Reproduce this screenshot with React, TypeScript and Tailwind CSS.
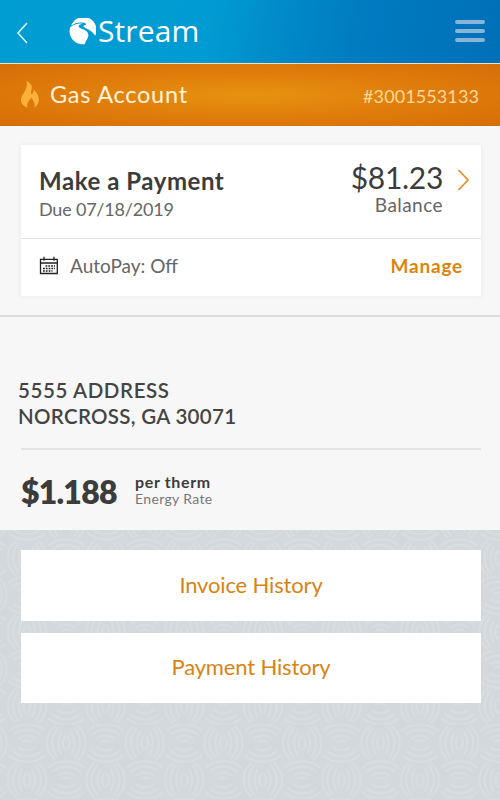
import React from 'react';

const StreamMark: React.FC = () => (
  <svg width="27" height="27" viewBox="0 0 27 27" fill="white">
    <path d="M2.600 6.200A13 13 0 0 1 26.200 17.800C24.600 14.200 20.600 11.600 16.300 9.900 13.200 8.700 14 7.700 16.300 7 18.300 6.200 16.500 5 13.500 4.600 9.500 4.100 5.600 5 2.600 7.500Z" />
    <path d="M1.200 9.300C5 6.300 9.500 5.100 13.500 5.700 9.500 6.700 8.200 8.500 11.600 10.300 16.500 12.200 20.200 14.200 19.200 18.400 18.500 21 16.500 23.500 15.600 26.200A13 13 0 0 1 1.200 9.300Z" />
  </svg>
);

const FlameIcon: React.FC = () => (
  <svg width="20" height="28" viewBox="0 0 20 28" fill="#fdb03c">
    <path d="M6.500 0c5 2.300 6.200 6 4.900 9.300-.5 1.400-.8 2.900.1 3.700 1.700-.6 2.500-2.600 2.200-4.600 3.300 3 5.600 7 5.100 11.300-.4 3.300-2.300 5.700-4.600 6.800 1.300-3.600-.2-6-3-9.800-2.100 3-5.200 5.500-3.700 9.900C3.500 25.300.800 22.500.9 18.800 1 13.300 8.800 8.800 6.500 0Z" />
  </svg>
);

const CalendarIcon: React.FC = () => (
  <svg width="20" height="20" viewBox="0 0 20 20" fill="none" stroke="#222" strokeWidth="1.300">
    <path d="M1.500 3.300h16.800v14.200H1.500zM1.500 7h16.800M5 .8v4M15 .8v4" />
    <path d="M6.500 10h9.500M4 12.500h12M4 15h9.500" strokeWidth="1.300" strokeDasharray="1.800 1" />
  </svg>
);

// Interlocking ripples, two cells wide and two cells high
const RipplePattern: React.FC = () => (
  <svg className="absolute inset-0" width="500" height="270">
    <defs>
      <g id="upright">
        <path d="M-11-17C-22-8-22 8-11 17M11-17C22-8 22 8 11 17" />
        <path d="M-8-15C-16-6-16 6-8 15M8-15C16-6 16 6 8 15" />
        <path d="M-5-11Q-11 0-5 11M5-11Q11 0 5 11M-1-7Q-6 0-1 7M1-7Q6 0 1 7" />
      </g>
      <g id="flat">
        <path d="M-18-12C-9-21 9-21 18-12M-18 12C-9 21 9 21 18 12" />
        <path d="M-14-8C-7-15 7-15 14-8M-14 8C-7 15 7 15 14 8" />
        <path d="M-9-4Q0-11 9-4M-9 4Q0 11 9 4M-5-1Q0-4 5-1" />
      </g>
      <pattern id="ripples" width="78.600" height="74" patternUnits="userSpaceOnUse" x="7.300" y="194.500">
        <g fill="none" stroke="#d9dee1" strokeWidth="1.800">
          <use href="#upright" x="19.650" y="55.500" />
          <use href="#flat" x="19.650" y="18.500" />
          <use href="#upright" x="58.950" y="18.500" />
          <use href="#flat" x="58.950" y="55.500" />
        </g>
      </pattern>
    </defs>
    <rect width="500" height="270" fill="url(#ripples)" />
  </svg>
);

const Header: React.FC = () => (
  <header className="flex h-16 items-center justify-between border-b border-[#eee0c4] bg-[linear-gradient(100deg,#009dd3_0%,#009bd2_42%,#0088c8_58%,#007ac0_74%,#0070b8_100%)] pr-[15px] pl-4">
    <div className="flex items-center">
      <svg width="12" height="22" viewBox="0 0 12 22" fill="none" stroke="#e5f5fb" strokeWidth="1.500" className="mt-0.5">
        <path d="M11 1 2 11l9 10" />
      </svg>
      <div className="ml-[41px] flex items-center">
        <StreamMark />
        <span className="-mt-0.5 ml-[2px] font-['Open_Sans',sans-serif] text-[30px] leading-[40px] tracking-[0.100px] text-white">Stream</span>
      </div>
    </div>
    <div className="-mt-px flex flex-col gap-[5px]">
      <span className="h-[4px] w-[30px] rounded-sm bg-[#86b5d8]" />
      <span className="h-[4px] w-[30px] rounded-sm bg-[#86b5d8]" />
      <span className="h-[4px] w-[30px] rounded-sm bg-[#86b5d8]" />
    </div>
  </header>
);

const AccountBar: React.FC = () => (
  <div className="flex h-[62px] items-center bg-[radial-gradient(ellipse_at_center,#e7920f_0%,#df7d0b_50%,#d66d08_100%)] pr-[21px] pl-[20px]">
    <FlameIcon />
    <span className="-mt-px ml-[10px] text-[23.500px] tracking-[0.750px] text-[#fff3dc]">Gas Account</span>
    <span className="ml-auto pt-0.5 text-[18px] tracking-[0.100px] text-[#ffd99f]">#3001553133</span>
  </div>
);

const PaymentCard: React.FC = () => (
  <div className="bg-white shadow-[0_0_5px_rgba(0,0,0,0.070)]">
    <div className="flex h-[94px] border-b border-[#e4e4e4] pr-[11px] pl-[18px]">
      <div className="pt-[21px]">
        <div className="text-[24px] leading-[30px] font-bold tracking-[0.550px] text-[#3c3c3c]">Make a Payment</div>
        <div className="text-[18px] leading-[27px] tracking-[-0.200px] text-[#666]">Due 07/18/2019</div>
      </div>
      <div className="ml-auto pt-[14px] text-right">
        <div className="text-[30px] leading-[36px] tracking-[-0.300px] text-[#3c3c3c]">$81.23</div>
        <div className="text-[19px] leading-[19px] tracking-[0.450px] text-[#666]">Balance</div>
      </div>
      <svg width="13" height="24" viewBox="0 0 13 24" fill="none" stroke="#e59328" strokeWidth="1.800" className="mt-[23px] ml-[14px]">
        <path d="M1.500 2 11 12 1.500 22" />
      </svg>
    </div>
    <div className="flex h-[57px] items-center pr-[18px] pb-[3px] pl-[18px]">
      <CalendarIcon />
      <span className="mt-px ml-[11px] text-[19px] text-[#666]">AutoPay: Off</span>
      <span className="mt-px ml-auto text-[19px] font-bold tracking-[0.800px] text-[#db850c]">Manage</span>
    </div>
  </div>
);

const EnergyRate: React.FC = () => (
  <section className="h-[213px] px-[19px] pt-[60px]">
    <div className="text-[20.500px] leading-[26px] font-semibold text-[#444]">
      <div className="-ml-px tracking-[0.600px]">5555 ADDRESS</div>
      <div className="-ml-px tracking-[0.300px]">NORCROSS, GA 30071</div>
    </div>
    <div className="mt-[19px] ml-[2px] border-t-2 border-[#e3e3e3]" />
    <div className="flex pt-[22px] pl-[2px]">
      <span className="w-[114px] text-[32px] leading-[40px] font-extrabold tracking-[-0.800px] text-[#3c3c3c]">$1.188</span>
      <div>
        <div className="text-[16px] leading-[20px] font-bold tracking-[0.650px] text-[#3c3c3c]">per therm</div>
        <div className="text-[14px] leading-[14px] tracking-[0.350px] text-[#777]">Energy Rate</div>
      </div>
    </div>
  </section>
);

const historyLinks = ['Invoice History', 'Payment History'];

export default function App() {
  return (
    <div className="h-[800px] w-[500px] overflow-hidden bg-[#f7f7f7] font-['Lato',sans-serif]">
      <Header />
      <AccountBar />
      <section className="h-[191px] border-b-2 border-[#dcdcdc] px-[19px] pt-[19px]">
        <div className="ml-[2px]">
          <PaymentCard />
        </div>
      </section>
      <EnergyRate />
      <section className="relative h-[270px] bg-[#d2d8db]">
        <RipplePattern />
        <div className="relative flex flex-col gap-3 pt-5 pr-[19px] pl-[21px]">
          {historyLinks.map((label) => (
            <button key={label} className="h-[70.500px] bg-white pb-0.5 text-[22px] tracking-[-0.150px] text-[#d98312]">
              {label}
            </button>
          ))}
        </div>
      </section>
    </div>
  );
}
